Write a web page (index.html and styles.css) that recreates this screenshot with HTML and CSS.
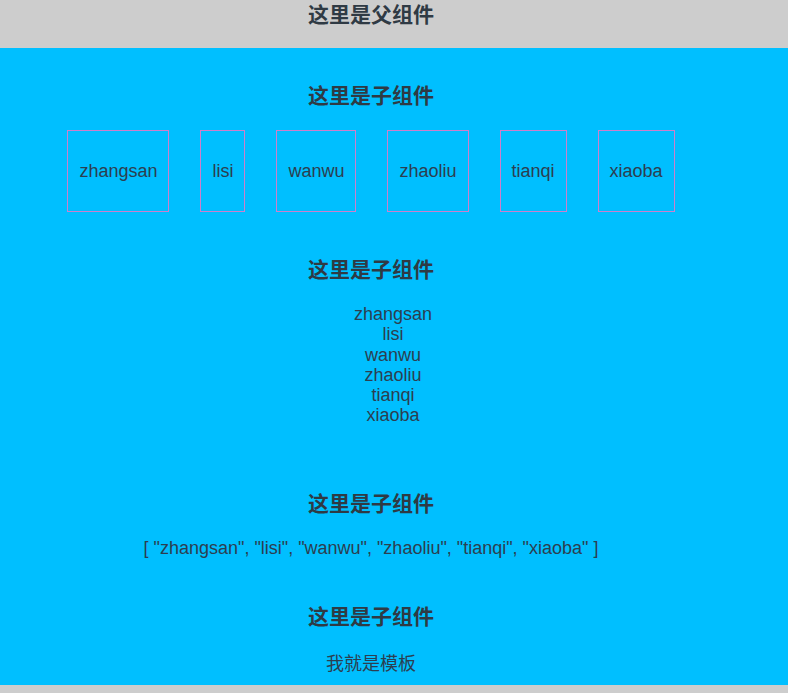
FILE: index.html
```html
<!DOCTYPE html>
<html lang="zh-CN">
<head>
<meta charset="utf-8">
<title>父组件</title>
<link rel="stylesheet" href="styles.css">
</head>
<body>
<div class="page">
  <div class="parent">
    <h3 class="title">这里是父组件</h3>
  </div>
  <div class="children">
    <div class="child child-1">
      <h3 class="title">这里是子组件</h3>
      <ul class="boxes">
        <li class="box">zhangsan</li>
        <li class="box">lisi</li>
        <li class="box">wanwu</li>
        <li class="box">zhaoliu</li>
        <li class="box">tianqi</li>
        <li class="box">xiaoba</li>
      </ul>
    </div>
    <div class="child child-2">
      <h3 class="title">这里是子组件</h3>
      <ul class="list">
        <li>zhangsan</li>
        <li>lisi</li>
        <li>wanwu</li>
        <li>zhaoliu</li>
        <li>tianqi</li>
        <li>xiaoba</li>
      </ul>
    </div>
    <div class="child child-3">
      <h3 class="title">这里是子组件</h3>
      <p class="text">[ "zhangsan", "lisi", "wanwu", "zhaoliu", "tianqi", "xiaoba" ]</p>
    </div>
    <div class="child child-4">
      <h3 class="title">这里是子组件</h3>
      <p class="text">我就是模板</p>
    </div>
  </div>
</div>
</body>
</html>
```
FILE: styles.css
```css
html, body {
  margin: 0;
  padding: 0;
  background: #cdcdcd;
}
body {
  font-family: "Liberation Sans", Arial, "Noto Sans CJK SC", sans-serif;
  font-size: 18px;
  color: #2c3e50;
}
.page {
  text-align: center;
}
.parent {
  background: #cdcdcd;
  padding-top: 3px;
  padding-right: 46px;
}
.title {
  margin: 0 0 21px;
  font-family: "Liberation Sans", Arial, "Noto Sans CJK SC", sans-serif;
  font-size: 21px;
  line-height: 24px;
  font-weight: bold;
  color: #2f3a44;
}
.children {
  background: #00bfff;
  padding: 36px 46px 11px 0;
}
.child-2 { margin-top: 46px; }
.child-3 { margin-top: 66px; }
.child-4 { margin-top: 47px; }
.boxes {
  list-style: none;
  margin: 0;
  padding: 1px 0 0;
  display: flex;
  justify-content: center;
  gap: 31px;
}
.box {
  border: 1px solid #cf7fcc;
  padding: 0 11px;
  height: 80px;
  line-height: 80px;
}
.list {
  list-style: none;
  margin: 0;
  padding: 1px 0 0 44px;
  line-height: 20.25px;
}
.child-3 .title { margin-bottom: 22px; }
.child-4 .title { margin-bottom: 25px; }
.text {
  margin: 0;
  line-height: 20px;
}
```
